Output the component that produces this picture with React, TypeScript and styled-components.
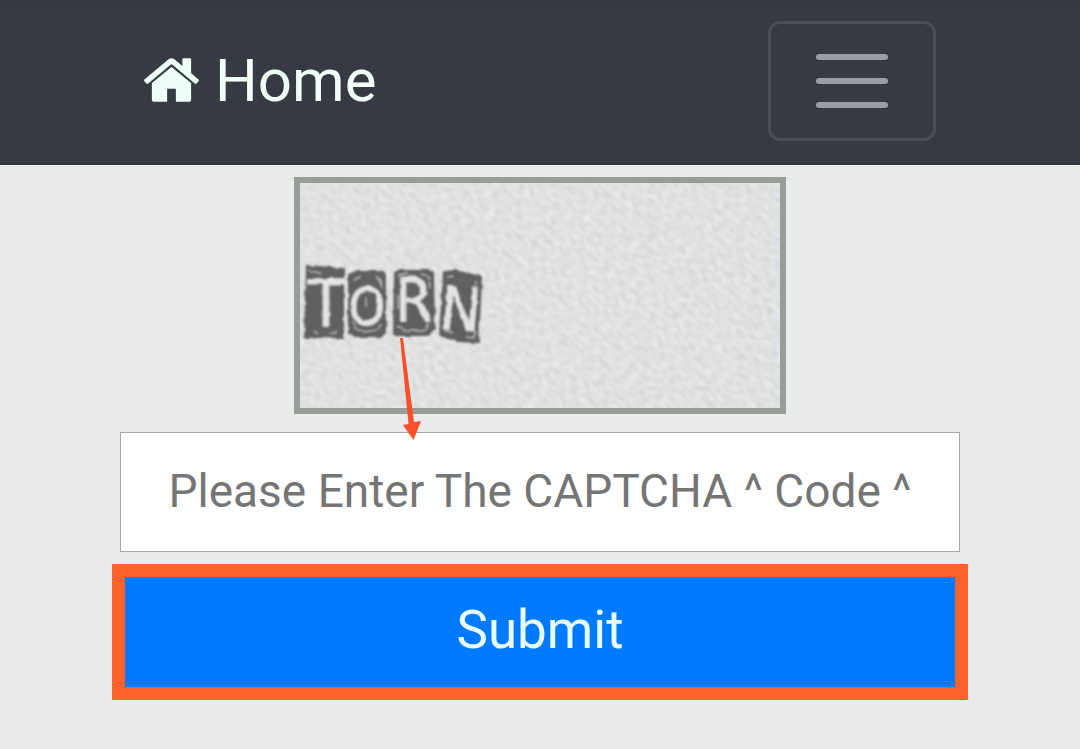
import React from "react";
import styled, { createGlobalStyle } from "styled-components";

const GlobalStyle = createGlobalStyle`
  *, *::before, *::after { box-sizing: border-box; }
  body {
    margin: 0;
    background: #e9ebed;
    font-family: Roboto, "Liberation Sans", sans-serif;
  }
`;

const Navbar = styled.nav`
  display: flex;
  align-items: flex-start;
  justify-content: space-between;
  padding: 13px 144px 22px;
  background: #363a42;
  border-top: 8px solid #343841;
  border-bottom: 2px solid #33373b;
`;

const Brand = styled.a`
  display: flex;
  align-items: center;
  gap: 16px;
  height: 120px;
  color: #f0fff8;
  font-size: 60px;
  line-height: 72px;
  text-decoration: none;
`;

const HomeIcon = styled.svg`
  width: 55px;
  height: 44px;
  margin-bottom: 2px;
  fill: currentColor;
`;

const MenuToggle = styled.button`
  display: flex;
  flex-direction: column;
  align-items: center;
  justify-content: center;
  gap: 18px;
  width: 168px;
  height: 120px;
  padding: 0;
  background: transparent;
  border: 3px solid #4a4e56;
  border-radius: 12px;
  cursor: pointer;
`;

const MenuBar = styled.span`
  width: 72px;
  height: 6px;
  border-radius: 3px;
  background: #9a9da1;
`;

const Form = styled.form`
  display: flex;
  flex-direction: column;
  align-items: center;
  padding: 12px 112px 48px;
`;

const CaptchaFrame = styled.div`
  position: relative;
  width: 492px;
  max-width: 100%;
  border: 6px solid #979e98;
  background: #dfe1e0;
`;

const CaptchaImage = styled.svg`
  display: block;
  width: 100%;
  height: auto;
`;

const Arrow = styled.svg`
  position: absolute;
  left: 96px;
  top: 152px;
  width: 28px;
  height: 108px;
  fill: #fb512a;
  pointer-events: none;
`;

const CodeInput = styled.input`
  width: calc(100% - 16px);
  height: 120px;
  margin: 18px 0 12px;
  padding: 0 12px 2px;
  border: 1px solid #a3a6aa;
  border-radius: 0;
  background: #fff;
  color: #495057;
  font-family: inherit;
  font-size: 46px;
  text-align: center;
  outline: none;
  &::placeholder {
    color: #757575;
    opacity: 1;
  }
`;

const SubmitButton = styled.button`
  width: 100%;
  height: 136px;
  padding: 0 0 4px;
  border: 13px solid #ff622b;
  border-radius: 0;
  background: #007bff;
  color: #e8fbff;
  font-family: inherit;
  font-size: 53px;
  line-height: 64px;
  cursor: pointer;
`;

const Letter = styled.text`
  font-family: "Liberation Sans Narrow", "DejaVu Sans Condensed", sans-serif;
  fill: #e4e4e4;
  stroke: #dcdcdc;
  stroke-width: 1;
  text-anchor: middle;
`;

const tiles = [
  { char: "T", tile: "7,83 43,86 43,155 26,153 5,154", x: 26, y: 144, size: 66, turn: 0 },
  { char: "O", tile: "49,92 58,88 83,88 85,92 85,150 80,153 54,153 49,150", x: 67, y: 142, size: 52, turn: 3 },
  { char: "R", tile: "95,90 100,87 129,87 133,90 134,145 128,152 98,152 94,149", x: 114, y: 139, size: 60, turn: 0 },
  { char: "N", tile: "144,89 155,88 181,94 178,159 158,158 140,152", x: 161, y: 147, size: 60, turn: 5 },
];

const Captcha = () => (
  <CaptchaImage viewBox="0 0 480 225" role="img" aria-label="CAPTCHA code TORN">
    <defs>
      <filter id="weave" x="0" y="0" width="100%" height="100%" colorInterpolationFilters="sRGB">
        <feTurbulence type="fractalNoise" baseFrequency="0.13 0.19" numOctaves={1} seed={7} />
        <feColorMatrix
          values="0.12 0.05 0 0 0.792
                  0.12 0.05 0 0 0.795
                  0.12 0.05 0 0 0.798
                  0 0 0 0 1"
        />
      </filter>
      <filter id="rough" x="-10%" y="-10%" width="120%" height="120%" colorInterpolationFilters="sRGB">
        <feTurbulence type="fractalNoise" baseFrequency="0.12" numOctaves={1} seed={4} />
        <feDisplacementMap in="SourceGraphic" scale="4" xChannelSelector="R" yChannelSelector="G" />
        <feGaussianBlur stdDeviation="1" />
      </filter>
    </defs>
    <rect width="480" height="225" fill="#dfe1e0" />
    <g transform="rotate(40 240 112)">
      <rect x="-60" y="-200" width="600" height="625" filter="url(#weave)" />
    </g>
    <g filter="url(#rough)">
      {tiles.map((t) => (
        <g key={t.char}>
          <polygon points={t.tile} fill="#606060" stroke="#606060" strokeWidth="2" strokeLinejoin="round" />
          <Letter x={t.x} y={t.y} fontSize={t.size} transform={`rotate(${t.turn} ${t.x} ${t.y - 22})`}>
            {t.char}
          </Letter>
        </g>
      ))}
      <g fill="none" stroke="#bdbdbd" strokeWidth="1.5">
        <path d="M8 88l13 2M14 149l4 1M30 150h6" />
        <path d="M54 97l7-4M76 93l5 4 1 8M52 138l4 8 9 3 11-2 5-6" />
        <path d="M98 92l10-2M121 91l8 2 1 12M97 143l8 5h18l6-8M98 112v14" />
        <path d="M147 94l8-1M176 98l1 14M144 146l8 4M166 154l8 1 2-8" />
        <path d="M66 114v10" />
      </g>
    </g>
  </CaptchaImage>
);

export default function App() {
  return (
    <>
      <GlobalStyle />
      <Navbar>
        <Brand href="#">
          <HomeIcon viewBox="25 253 1614 1283" aria-hidden="true">
            <path d="M1408 992v480q0 26-19 45t-45 19h-384v-384h-256v384h-384q-26 0-45-19t-19-45v-480q0-1 .5-3t.5-3l575-474 575 474q1 2 1 6zm223-69l-62 74q-8 9-21 11h-3q-13 0-21-7l-692-577-692 577q-12 8-24 7-13-2-21-11l-62-74q-8-10-7-23.5t11-21.5l719-599q32-26 76-26t76 26l244 204v-195q0-14 9-23t23-9h192q14 0 23 9t9 23v408l219 182q10 8 11 21.5t-7 23.5z" />
          </HomeIcon>
          Home
        </Brand>
        <MenuToggle type="button" aria-label="Toggle navigation">
          <MenuBar />
          <MenuBar />
          <MenuBar />
        </MenuToggle>
      </Navbar>
      <Form onSubmit={(e: React.FormEvent) => e.preventDefault()}>
        <CaptchaFrame>
          <Captcha />
          <Arrow viewBox="0 0 28 108" aria-hidden="true">
            <path d="M4 3L7 3L18 87L25 86L17.500 105L7 90L12.500 89Z" />
          </Arrow>
        </CaptchaFrame>
        <CodeInput
          type="text"
          aria-label="CAPTCHA code"
          placeholder="Please Enter The CAPTCHA ^ Code ^"
        />
        <SubmitButton type="submit">Submit</SubmitButton>
      </Form>
    </>
  );
}
